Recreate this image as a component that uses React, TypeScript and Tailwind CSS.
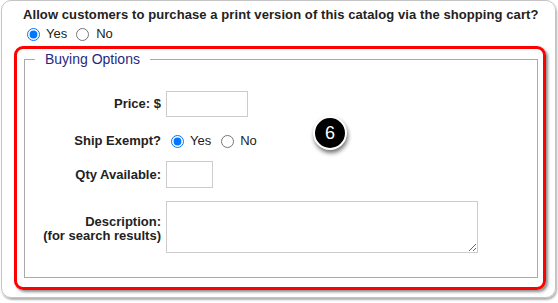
export default function App() {
  const font = "font-['Liberation_Sans',Arial,sans-serif]";

  return (
    <div className={`relative w-[558px] h-[303px] bg-white text-[#222] ${font}`}>
      {/* frame of the screenshot */}
      <div className="ml-px w-[555px] h-[298px] rounded-[10px] border border-[#c4c4c4] shadow-[1px_2px_2px_rgba(0,0,0,0.3)] pt-[6px] pl-[12px]">
        <p className="pl-[9px] text-[13px] leading-[15px] font-bold tracking-[0.085px]">
          Allow customers to purchase a print version of this catalog via the shopping cart?
        </p>
        <div className="pl-[13px] mt-[4px] h-[16px] flex items-center text-[13px]">
          <input type="radio" name="print" defaultChecked className="m-0 w-[13px] h-[13px]" />
          <span className="ml-[6px]">Yes</span>
          <input type="radio" name="print" className="m-0 ml-[9px] w-[13px] h-[13px]" />
          <span className="ml-[7px]">No</span>
        </div>

        {/* highlighted section */}
        <div className="mt-[4px] w-[532px] h-[244px] border-[3px] border-[#ff0000] rounded-[9px] shadow-[2px_2px_3px_rgba(0,0,0,0.45)] pt-[2px] pl-[7px]">
          <fieldset className="w-[514px] h-[227px] border border-[#aaaaaa]">
            <legend className="ml-[10px] px-[10px] text-[14px] leading-[16px] text-[#1f2a80]">
              Buying Options
            </legend>

            <div className="grid grid-cols-[136px_1fr] gap-x-[5px] text-[13px]">
              <div className="mt-[24px] h-[26px] flex items-center justify-end font-bold">Price: $</div>
              <div className="mt-[24px]">
                <input type="text" className="block w-[82px] h-[26px] border border-[#cccccc]" />
              </div>

              <div className="mt-[14px] h-[20px] flex items-center justify-end font-bold">Ship Exempt?</div>
              <div className="mt-[14px] h-[20px] flex items-center">
                <input type="radio" name="ship" defaultChecked className="m-0 ml-[5px] w-[13px] h-[13px]" />
                <span className="ml-[6px]">Yes</span>
                <input type="radio" name="ship" className="m-0 ml-[10px] w-[13px] h-[13px]" />
                <span className="ml-[6px]">No</span>
              </div>

              <div className="mt-[10px] h-[27px] flex items-center justify-end font-bold">Qty Available:</div>
              <div className="mt-[10px]">
                <input type="text" className="block w-[47px] h-[27px] border border-[#cccccc]" />
              </div>

              <div className="mt-[13px] h-[52px] pt-[4px] flex flex-col items-end justify-center font-bold leading-[14px]">
                <span>Description:</span>
                <span>(for search results)</span>
              </div>
              <div className="mt-[13px]">
                <textarea className="block w-[312px] h-[52px] border border-[#cccccc]" />
              </div>
            </div>
          </fieldset>
        </div>
      </div>

      {/* step badge */}
      <div className="absolute left-[313px] top-[116px] w-[34px] h-[34px] rounded-full bg-black border-2 border-white shadow-[1px_3px_4px_rgba(0,0,0,0.55)] flex items-center justify-center text-white text-[18px] leading-none">
        6
      </div>
    </div>
  );
}
